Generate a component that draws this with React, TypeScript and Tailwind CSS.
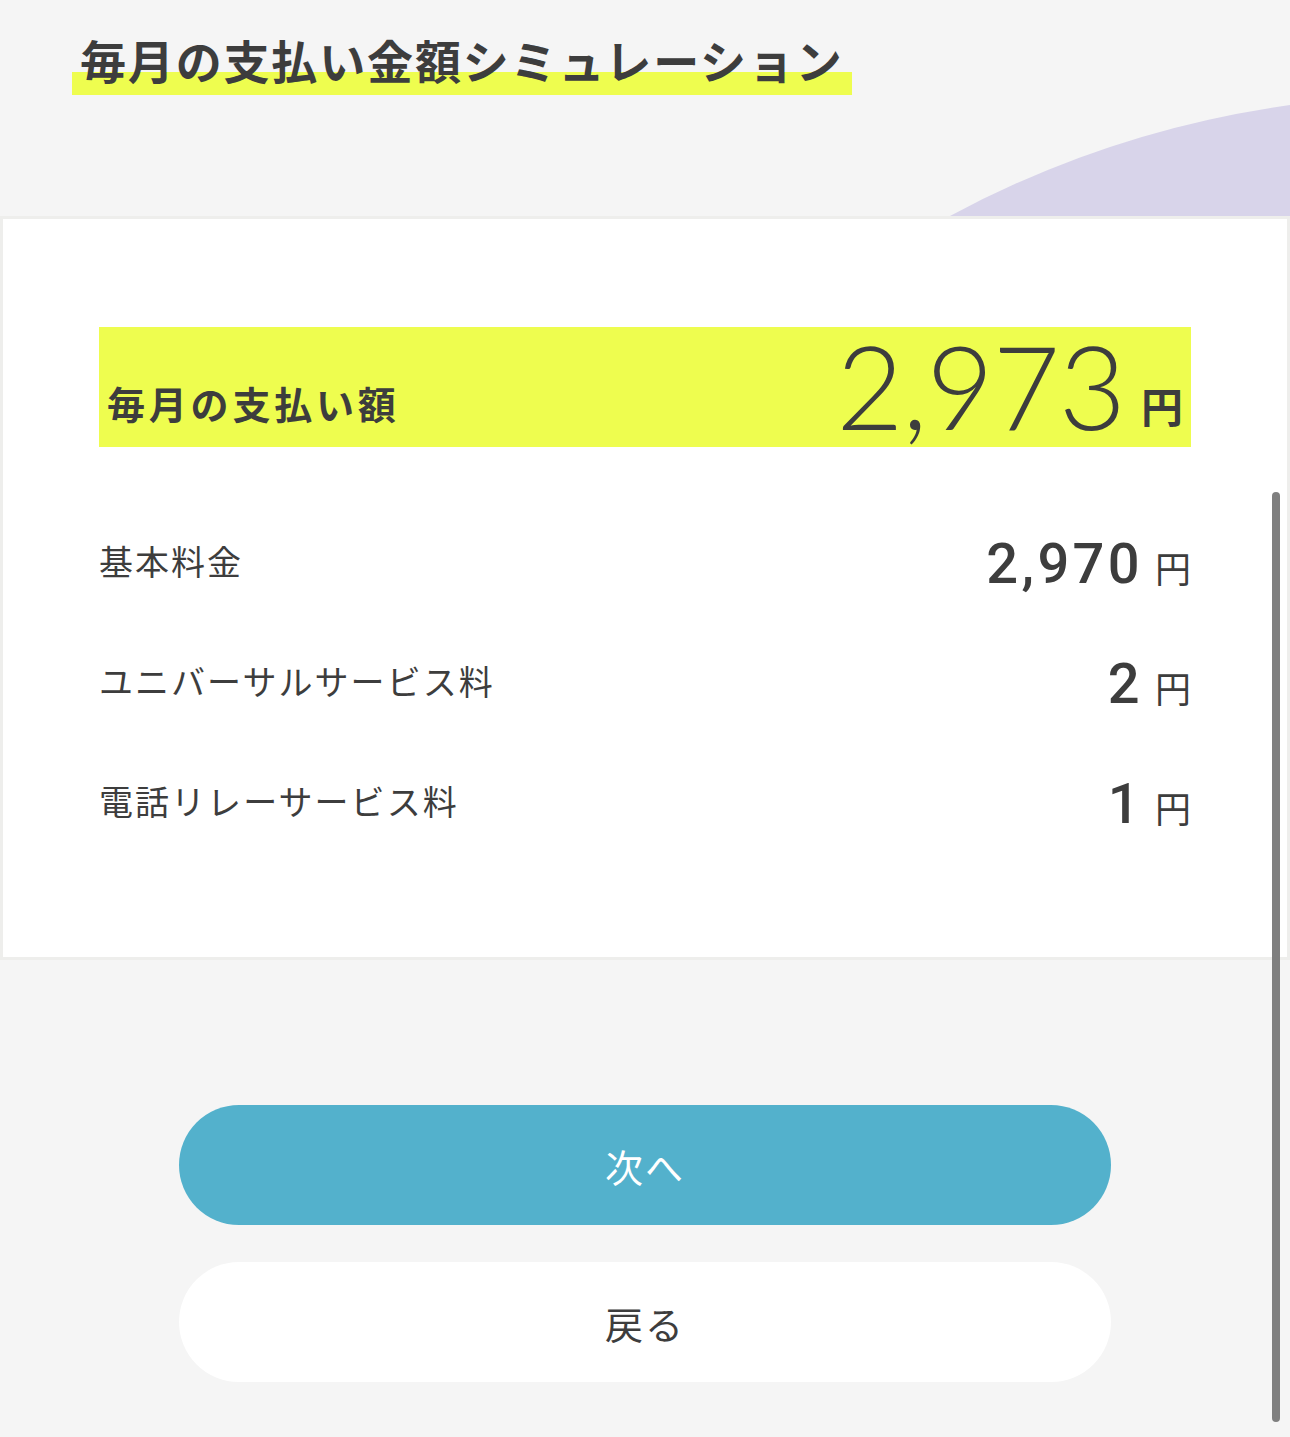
import React from 'react';

const jp = { fontFamily: '"Noto Sans CJK JP", "Noto Sans", sans-serif' };

const fees = [
  { label: '基本料金', value: '2,970' },
  { label: 'ユニバーサルサービス料', value: '2' },
  { label: '電話リレーサービス料', value: '1' },
];

export default function App() {
  return (
    <div className="relative min-h-[1437px] overflow-hidden bg-[#f5f5f5] text-[#3d3d3d]" style={jp}>
      {/* lavender wave peeking behind the card */}
      <svg className="absolute right-0 top-[100px] h-[160px] w-[340px]" viewBox="0 0 340 160" preserveAspectRatio="none">
        <path d="M0 116 Q 160 30 340 5 L 340 160 L 0 160 Z" fill="#d8d4ea" />
      </svg>

      <header className="pl-[72px] pt-[23px]">
        <h1 className="inline-block bg-[linear-gradient(transparent_68%,#eefd4f_68%)] px-2 text-[46px] font-bold leading-[72px] tracking-[0.04em]">
          毎月の支払い金額シミュレーション
        </h1>
      </header>

      <main className="relative z-10 mt-[121px] border-[3px] border-[#eeeeec] bg-white px-[96px] pb-[96px] pt-[108px]">
        <div className="flex h-[120px] items-end justify-between bg-[#eefd4f] px-2 pb-[18px]">
          <span className="pb-[7px] text-[38px] font-bold leading-none tracking-[0.1em]">毎月の支払い額</span>
          <span className="flex items-end gap-[16px]">
            <span className="-mb-[7px] text-[116px] font-light leading-[0.85] tracking-[-0.01em]" style={{ fontFamily: 'Lato, "Noto Sans", sans-serif' }}>
              2,973
            </span>
            <span className="pb-[3px] text-[42px] font-bold leading-none">円</span>
          </span>
        </div>

        <ul className="mt-[54px]">
          {fees.map((f) => (
            <li key={f.label} className="flex h-[120px] items-center justify-between">
              <span className="text-[34px] leading-none tracking-[0.06em]">{f.label}</span>
              <span className="flex items-baseline gap-[12px] pt-[6px]">
                <span className="text-[56px] font-medium leading-none tracking-[0.06em]" style={{ fontFamily: 'Roboto, "Noto Sans", sans-serif' }}>
                  {f.value}
                </span>
                <span className="text-[36px] leading-none">円</span>
              </span>
            </li>
          ))}
        </ul>
      </main>

      <div className="mx-auto mt-[145px] flex w-[932px] flex-col gap-[37px]">
        <button className="h-[120px] w-full rounded-full bg-[#53b1cc] text-[38px] tracking-[0.05em] text-white">次へ</button>
        <button className="h-[120px] w-full rounded-full bg-white text-[38px] tracking-[0.05em] text-[#3d3d3d]">戻る</button>
      </div>

      {/* overlay scrollbar */}
      <div className="absolute right-[10px] top-[492px] z-20 h-[930px] w-[8px] rounded-full bg-[#7f7f7f]" />
    </div>
  );
}
